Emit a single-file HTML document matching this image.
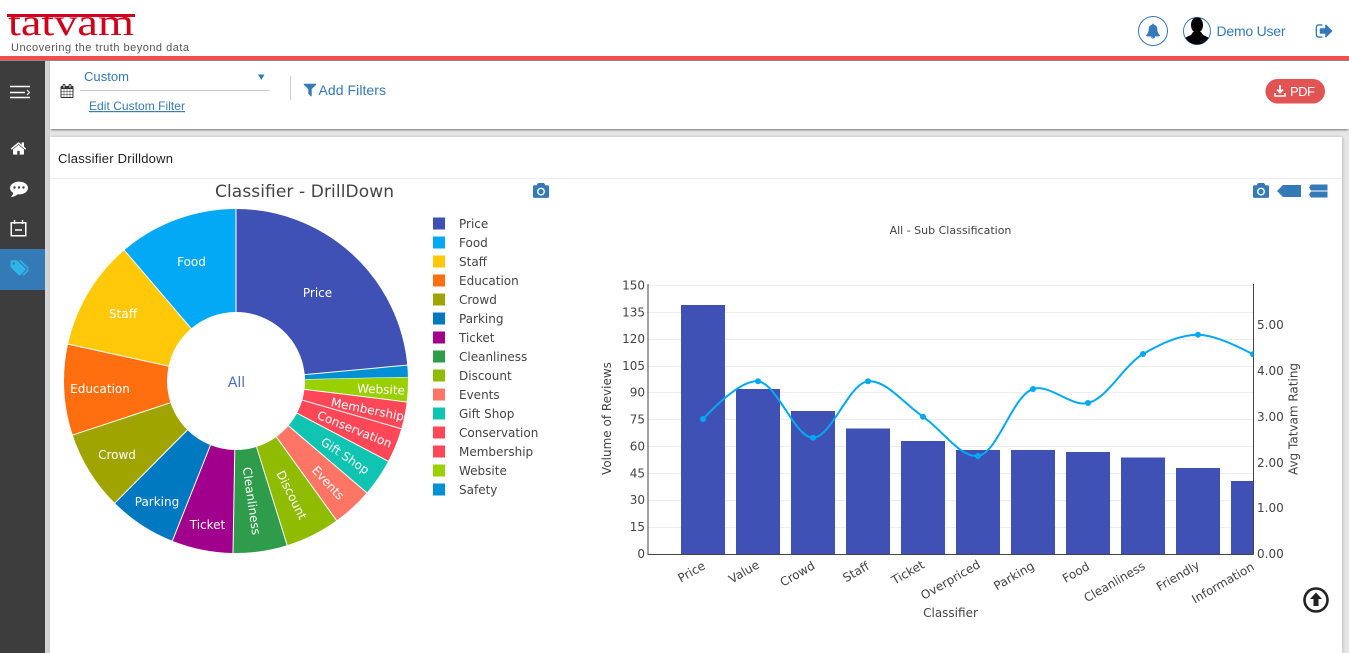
<!DOCTYPE html>
<html><head><meta charset="utf-8"><title>Tatvam</title>
<style>
html,body{margin:0;padding:0;width:1349px;height:653px;overflow:hidden;background:#e6e6e6;font-family:"Liberation Sans",sans-serif}
.a{position:absolute}
svg text{font-family:"DejaVu Sans",sans-serif;fill:#444;font-size:12px}
svg text.l{font-family:"Liberation Sans",sans-serif}
.pl text{fill:#fff;text-anchor:middle}
.lg text{fill:#444}
.t text{text-anchor:end}
.x text{text-anchor:middle}
.s circle{fill:none;stroke-width:103}
</style></head>
<body>
<div class="a" style="left:0;top:0;width:1349px;height:56px;background:#fff"></div>
<div class="a" style="left:0;top:56px;width:1349px;height:4px;background:#f44b4b"></div>
<div class="a" style="left:0;top:60px;width:45px;height:593px;background:#3d3d3d"></div>
<div class="a" style="left:0;top:249px;width:45px;height:41px;background:#337ab7"></div>
<div class="a" style="left:45px;top:60px;width:5px;height:593px;background:#d4d4d4"></div>
<div class="a" style="left:50px;top:60px;width:1299px;height:69px;background:#fff;box-shadow:0 2px 2px -1px rgba(0,0,0,.5)"></div>
<div class="a" style="left:0;top:60px;width:1349px;height:1px;background:#8a8a8a"></div>
<div class="a" style="left:50px;top:137px;width:1292px;height:516px;background:#fff;box-shadow:1px 0 3px rgba(0,0,0,.18)"></div>
<div class="a" style="left:50px;top:178px;width:1292px;height:1px;background:#eee"></div>

<svg class="a" style="left:0;top:0" width="1349" height="653" viewBox="0 0 1349 653">
<defs>
<clipPath id="plot"><rect x="648" y="284" width="605.500" height="271"/></clipPath>
<clipPath id="av"><circle cx="1197" cy="31" r="13.500"/></clipPath>
<clipPath id="lg"><rect x="0" y="16" width="140" height="24"/></clipPath>
<path id="cam" d="M896 672q119 0 203.500 84.500t84.500 203.500-84.500 203.500-203.500 84.500-203.500-84.500-84.500-203.500 84.500-203.500 203.500-84.500zm704-416q106 0 181 75t75 181v896q0 106-75 181t-181 75h-1408q-106 0-181-75t-75-181v-896q0-106 75-181t181-75h224l51-136q19-49 69.500-84.500t103.500-35.500h512q53 0 103.500 35.500t69.500 84.500l51 136h224zm-704 1152q185 0 316.500-131.500t131.500-316.500-131.500-316.500-316.500-131.500-316.500 131.500-131.500 316.500 131.500 316.500 316.500 131.500z"/>
</defs>

<!-- logo -->
<rect x="7" y="14" width="128" height="3" fill="#d0021b"/>
<g clip-path="url(#lg)"><text class="l" x="8" y="35" textLength="126" lengthAdjust="spacingAndGlyphs" style="font-size:38px;fill:#d0021b;font-family:'Liberation Serif',serif">tatvam</text></g>
<text class="l" x="11" y="51" textLength="178" style="font-size:11px;fill:#555">Uncovering the truth beyond data</text>

<!-- top right -->
<circle cx="1153" cy="31" r="14.500" fill="#fff" stroke="#337ab7"/>
<svg x="1145.500" y="23.500" width="15" height="15" viewBox="0 0 1792 1792"><path fill="#337ab7" d="M912 1696q0-16-16-16-59 0-101.500-42.500t-42.500-101.500q0-16-16-16t-16 16q0 73 51.500 124.500t124.500 51.500q16 0 16-16zm816-288q0 52-38 90t-90 38h-448q0 106-75 181t-181 75-181-75-75-181h-448q-52 0-90-38t-38-90q50-42 91-88t85-119.500 74.500-158.500 50-206 19.500-260q0-152 117-282.500t307-158.500q-8-19-8-39 0-40 28-68t68-28 68 28 28 68q0 20-8 39 190 28 307 158.500t117 282.500q0 139 19.500 260t50 206 74.500 158.500 85 119.500 91 88z"/></svg>
<circle cx="1197" cy="31" r="13.500" fill="#fff" stroke="#337ab7" stroke-width="1"/>
<g clip-path="url(#av)"><ellipse cx="1197" cy="25" rx="6" ry="8" fill="#000"/><path d="M1182 46c0-7 4-9 9-11l2-3h8l2 3c5 2 9 4 9 11z" fill="#000"/></g>
<text class="l" x="1216.500" y="36" textLength="69" style="font-size:14px;fill:#337ab7">Demo User</text>
<svg x="1315" y="21.500" width="19" height="19" viewBox="0 0 1792 1792"><path fill="#337ab7" d="M704 1440q0 4 1 20t.5 26.500-3 23.500-10 19.500-20.500 6.500h-320q-119 0-203.500-84.500t-84.500-203.500v-704q0-119 84.500-203.500t203.500-84.500h320q13 0 22.500 9.500t9.500 22.500q0 4 1 20t.5 26.500-3 23.500-10 19.500-20.500 6.500h-320q-66 0-113 47t-47 113v704q0 66 47 113t113 47h312l11.500 1 11.500 3 8 5.500 7 9 2 13.500zm928-544q0 26-19 45l-544 544q-19 19-45 19t-45-19-19-45v-288h-448q-26 0-45-19t-19-45v-384q0-26 19-45t45-19h448v-288q0-26 19-45t45-19 45 19l544 544q19 19 19 45z"/></svg>

<!-- sidebar -->
<g stroke="#fff" stroke-width="1.500" fill="none"><path d="M10 86.500h20M10 92.500h15M10 97.500h20"/><path d="M27 90l2.500 2.500-2.500 2.500" stroke-width="1"/></g>
<svg x="10" y="140" width="17" height="17" viewBox="0 0 1792 1792"><path fill="#fff" d="M1472 992v480q0 26-19 45t-45 19h-384v-384h-256v384h-384q-26 0-45-19t-19-45v-480q0-1 .5-3t.5-3l575-474 575 474q1 2 1 6zm223-69l-62 74q-8 9-21 11h-3q-13 0-21-7l-692-577-692 577q-12 8-24 7-13-2-21-11l-62-74q-8-10-7-23.500t11-21.500l719-599q32-26 76-26t76 26l244 204v-195q0-14 9-23t23-9h192q14 0 23 9t9 23v408l219 182q10 8 11 21.500t-7 23.500z"/></svg>
<svg x="10" y="179" width="18" height="18" viewBox="0 0 1792 1792"><path fill="#fff" d="M1792 896q0 174-120 321.500t-326 233-450 85.500q-70 0-145-8-198 175-460 242-49 14-114 22-17 2-30.500-9t-17.500-29v-1q-3-4-.5-12t2-10 4.500-9.500l6-9 7-8.500 8-9q7-8 31-34.500t34.500-38 31-39.500 32.500-51 27-59 26-76q-157-89-247.500-220t-90.500-281q0-130 71-248.500t191-204.500 286-136.500 348-50.500q244 0 450 85.500t326 233 120 321.500z"/></svg>
<g fill="#3d3d3d"><circle cx="14.500" cy="187.500" r="1.200"/><circle cx="19" cy="187.500" r="1.200"/><circle cx="23.500" cy="187.500" r="1.200"/></g>
<g fill="none" stroke="#fff"><rect x="11.250" y="222.750" width="14.500" height="13" stroke-width="1.500"/><path d="M14.500 220v4M22.500 220v4" stroke-width="1.500"/><path d="M15 230h7" stroke-width="1.500"/></g>
<svg x="10.500" y="259" width="18" height="18" viewBox="0 0 1792 1792"><path fill="#2fb4e6" d="M448 448q0-53-37.500-90.500t-90.500-37.500-90.500 37.500-37.500 90.500 37.500 90.500 90.500 37.500 90.500-37.500 37.500-90.500zm1067 576q0 53-37 90l-491 492q-39 37-91 37-53 0-90-37l-715-716q-38-37-64.500-101t-26.500-117v-416q0-52 38-90t90-38h416q53 0 117 26.500t102 64.500l715 714q37 39 37 91zm384 0q0 53-37 90l-491 492q-39 37-91 37-36 0-59-14t-53-45l470-470q37-37 37-90 0-52-37-91l-715-714q-38-38-102-64.500t-117-26.500h224q53 0 117 26.500t102 64.500l715 714q37 39 37 91z"/></svg>

<!-- filter bar -->
<svg x="60" y="84" width="14" height="14" viewBox="0 0 1792 1792"><path fill="#333" d="M192 1664h288v-288h-288v288zm352 0h320v-288h-320v288zm-352-352h288v-320h-288v320zm352 0h320v-320h-320v320zm-352-384h288v-288h-288v288zm736 736h320v-288h-320v288zm-384-736h320v-288h-320v288zm768 736h288v-288h-288v288zm-384-352h320v-320h-320v320zm-352-864v-288q0-13-9.500-22.500t-22.500-9.500h-64q-13 0-22.500 9.500t-9.500 22.500v288q0 13 9.500 22.500t22.500 9.500h64q13 0 22.500-9.500t9.500-22.500zm736 864h288v-320h-288v320zm-384-384h320v-288h-320v288zm384 0h288v-288h-288v288zm32-480v-288q0-13-9.500-22.500t-22.500-9.500h-64q-13 0-22.500 9.500t-9.500 22.500v288q0 13 9.500 22.500t22.500 9.500h64q13 0 22.500-9.500t9.500-22.500zm384-64v1280q0 52-38 90t-90 38h-1408q-52 0-90-38t-38-90v-1280q0-52 38-90t90-38h128v-96q0-66 47-113t113-47h64q66 0 113 47t47 113v96h384v-96q0-66 47-113t113-47h64q66 0 113 47t47 113v96h128q52 0 90 38t38 90z"/></svg>
<text class="l" x="84" y="81" textLength="45" style="font-size:13px;fill:#337ab7">Custom</text>
<path d="M258 74.500h6.500l-3.250 5.500z" fill="#337ab7"/>
<rect x="80" y="90" width="190" height="1" fill="#ccc"/>
<text class="l" x="89" y="110" textLength="96" style="font-size:12px;fill:#337ab7;text-decoration:underline">Edit Custom Filter</text>
<rect x="290" y="76" width="1" height="24" fill="#ccc"/>
<svg x="302" y="81.500" width="16" height="16" viewBox="0 0 1792 1792"><path fill="#337ab7" d="M1595 295q17 41-14 70l-493 493v742q0 42-39 59-13 5-25 5-27 0-45-19l-256-256q-19-19-19-45v-486l-493-493q-31-29-14-70 17-39 59-39h1280q42 0 59 39z"/></svg>
<text class="l" x="318.500" y="95" textLength="67.500" style="font-size:14px;fill:#337ab7">Add Filters</text>
<rect x="1265.500" y="79" width="59.500" height="24.500" rx="12.250" fill="#e25353"/>
<path d="M1280 85v7M1277 89.500l3 3 3-3" stroke="#fff" stroke-width="1.800" fill="none"/><path d="M1275 93v3h10v-3" stroke="#fff" stroke-width="1.500" fill="none"/>
<text class="l" x="1290" y="96" textLength="25" style="font-size:13px;fill:#fff">PDF</text>

<!-- card header -->
<text class="l" x="58" y="163" textLength="115" style="font-size:13px;fill:#222">Classifier Drilldown</text>

<!-- pie -->
<text x="215" y="197" textLength="179" style="font-size:17px">Classifier - DrillDown</text>
<svg x="533" y="183" width="16" height="16" viewBox="0 0 1792 1792"><use href="#cam" fill="#337ab7"/></svg>
<g class="s" transform="rotate(-90 236 381)">
<circle cx="236" cy="381" r="120.500" pathLength="360" stroke="#3f51b5" stroke-dasharray="84.7 360" stroke-dashoffset="0"/>
<circle cx="236" cy="381" r="120.500" pathLength="360" stroke="#0090d5" stroke-dasharray="4 360" stroke-dashoffset="-84.7"/>
<circle cx="236" cy="381" r="120.500" pathLength="360" stroke="#9bd000" stroke-dasharray="8.300 360" stroke-dashoffset="-88.7"/>
<circle cx="236" cy="381" r="120.500" pathLength="360" stroke="#ff4757" stroke-dasharray="9.100 360" stroke-dashoffset="-97"/>
<circle cx="236" cy="381" r="120.500" pathLength="360" stroke="#ff4757" stroke-dasharray="11.700 360" stroke-dashoffset="-106.1"/>
<circle cx="236" cy="381" r="120.500" pathLength="360" stroke="#0fc4b0" stroke-dasharray="12.700 360" stroke-dashoffset="-117.8"/>
<circle cx="236" cy="381" r="120.500" pathLength="360" stroke="#ff7565" stroke-dasharray="13.700 360" stroke-dashoffset="-130.5"/>
<circle cx="236" cy="381" r="120.500" pathLength="360" stroke="#8fbc00" stroke-dasharray="18.500 360" stroke-dashoffset="-144.2"/>
<circle cx="236" cy="381" r="120.500" pathLength="360" stroke="#2e9c4a" stroke-dasharray="18.300 360" stroke-dashoffset="-162.7"/>
<circle cx="236" cy="381" r="120.500" pathLength="360" stroke="#a0008c" stroke-dasharray="20.700 360" stroke-dashoffset="-181"/>
<circle cx="236" cy="381" r="120.500" pathLength="360" stroke="#0079c0" stroke-dasharray="23.100 360" stroke-dashoffset="-201.7"/>
<circle cx="236" cy="381" r="120.500" pathLength="360" stroke="#a0a400" stroke-dasharray="26.900 360" stroke-dashoffset="-224.8"/>
<circle cx="236" cy="381" r="120.500" pathLength="360" stroke="#ff6f10" stroke-dasharray="30.700 360" stroke-dashoffset="-251.7"/>
<circle cx="236" cy="381" r="120.500" pathLength="360" stroke="#ffc90a" stroke-dasharray="37.100 360" stroke-dashoffset="-282.400"/>
<circle cx="236" cy="381" r="120.500" pathLength="360" stroke="#03a9f4" stroke-dasharray="40.500 360" stroke-dashoffset="-319.500"/>
</g>
<g stroke="#fff" stroke-width="1">
<line x1="236" y1="312" x2="236" y2="208"/>
<line x1="236" y1="312" x2="236" y2="208" transform="rotate(84.7 236 381)"/>
<line x1="236" y1="312" x2="236" y2="208" transform="rotate(88.7 236 381)" stroke-width=".5"/>
<line x1="236" y1="312" x2="236" y2="208" transform="rotate(97 236 381)"/>
<line x1="236" y1="312" x2="236" y2="208" transform="rotate(106.1 236 381)"/>
<line x1="236" y1="312" x2="236" y2="208" transform="rotate(117.8 236 381)"/>
<line x1="236" y1="312" x2="236" y2="208" transform="rotate(130.5 236 381)"/>
<line x1="236" y1="312" x2="236" y2="208" transform="rotate(144.2 236 381)"/>
<line x1="236" y1="312" x2="236" y2="208" transform="rotate(162.7 236 381)"/>
<line x1="236" y1="312" x2="236" y2="208" transform="rotate(181 236 381)"/>
<line x1="236" y1="312" x2="236" y2="208" transform="rotate(201.7 236 381)"/>
<line x1="236" y1="312" x2="236" y2="208" transform="rotate(224.8 236 381)"/>
<line x1="236" y1="312" x2="236" y2="208" transform="rotate(251.7 236 381)"/>
<line x1="236" y1="312" x2="236" y2="208" transform="rotate(282.4 236 381)"/>
<line x1="236" y1="312" x2="236" y2="208" transform="rotate(319.5 236 381)"/>
</g>
<g class="pl">
<text x="317.500" y="297">Price</text>
<text x="191.500" y="266">Food</text>
<text x="123" y="318">Staff</text>
<text x="100" y="393">Education</text>
<text x="117" y="459">Crowd</text>
<text x="157" y="506">Parking</text>
<text x="207.500" y="529">Ticket</text>
<text transform="translate(251.500 501) rotate(81.900)" y="4">Cleanliness</text>
<text transform="translate(291.500 495) rotate(63.500)" y="4">Discount</text>
<text transform="translate(328 483) rotate(47.300)" y="4">Events</text>
<text transform="translate(345 456) rotate(34)" y="4">Gift Shop</text>
<text transform="translate(354.500 429.500) rotate(21.900)" y="4">Conservation</text>
<text transform="translate(367.500 409.500) rotate(11.500)" y="4">Membership</text>
<text transform="translate(381 389.500) rotate(2.800)" y="4">Website</text>
</g>
<text x="236.500" y="387" text-anchor="middle" style="font-size:14px;fill:#4a6fc4">All</text>

<!-- legend -->
<g class="lg">
<rect x="433" y="217.500" width="12" height="12" fill="#3f51b5"/><text x="459" y="228">Price</text>
<rect x="433" y="236.500" width="12" height="12" fill="#03a9f4"/><text x="459" y="247">Food</text>
<rect x="433" y="255.500" width="12" height="12" fill="#ffc90a"/><text x="459" y="266">Staff</text>
<rect x="433" y="274.500" width="12" height="12" fill="#ff6f10"/><text x="459" y="285">Education</text>
<rect x="433" y="293.500" width="12" height="12" fill="#a0a400"/><text x="459" y="304">Crowd</text>
<rect x="433" y="312.500" width="12" height="12" fill="#0079c0"/><text x="459" y="323">Parking</text>
<rect x="433" y="331.500" width="12" height="12" fill="#a0008c"/><text x="459" y="342">Ticket</text>
<rect x="433" y="350.500" width="12" height="12" fill="#2e9c4a"/><text x="459" y="361">Cleanliness</text>
<rect x="433" y="369.500" width="12" height="12" fill="#8fbc00"/><text x="459" y="380">Discount</text>
<rect x="433" y="388.500" width="12" height="12" fill="#ff7565"/><text x="459" y="399">Events</text>
<rect x="433" y="407.500" width="12" height="12" fill="#0fc4b0"/><text x="459" y="418">Gift Shop</text>
<rect x="433" y="426.500" width="12" height="12" fill="#ff4757"/><text x="459" y="437">Conservation</text>
<rect x="433" y="445.500" width="12" height="12" fill="#ff4757"/><text x="459" y="456">Membership</text>
<rect x="433" y="464.500" width="12" height="12" fill="#9bd000"/><text x="459" y="475">Website</text>
<rect x="433" y="483.500" width="12" height="12" fill="#0090d5"/><text x="459" y="494">Safety</text>
</g>

<!-- right chart toolbar -->
<svg x="1253" y="183" width="16" height="16" viewBox="0 0 1792 1792"><use href="#cam" fill="#337ab7"/></svg>
<path d="M1277 191l6-6h18v12h-18z" fill="#337ab7"/>
<path d="M1311 184.500h16.500v6h-16.500l-2-3zM1311 191.500h16.500v6h-16.500l-2-3z" fill="#337ab7"/>
<text x="950.500" y="234" text-anchor="middle" style="font-size:11px">All - Sub Classification</text>

<!-- grid -->
<g stroke="#eee" stroke-width="1">
<path d="M648 285.500h605M648 312.500h605M648 339.500h605M648 366.500h605M648 392.500h605M648 419.500h605M648 446.500h605M648 473.500h605M648 500.500h605M648 527.500h605"/>
</g>
<!-- bars -->
<g fill="#3f51b5">
<rect x="681" y="305" width="44" height="249"/>
<rect x="736" y="389" width="44" height="165"/>
<rect x="791" y="411" width="44" height="143"/>
<rect x="846" y="428.500" width="44" height="125.500"/>
<rect x="901" y="441" width="44" height="113"/>
<rect x="956" y="450" width="44" height="104"/>
<rect x="1011" y="450" width="44" height="104"/>
<rect x="1066" y="452" width="44" height="102"/>
<rect x="1121" y="457.500" width="44" height="96.500"/>
<rect x="1176" y="468" width="44" height="86"/>
<rect x="1231" y="481" width="22.500" height="73"/>
</g>
<!-- axes -->
<g stroke="#444" stroke-width="1"><path d="M648 284v270.500M1253.500 284v270.500M647.500 554.500h606"/></g>
<!-- line -->
<g clip-path="url(#plot)">
<path fill="none" stroke="#03a9f4" stroke-width="2" d="M703 419Q740.400 379.600 758 381.300C777.100 383.200 794.700 437.700 813 437.700C831.300 437.700 848.700 383.500 868 381.300C885.500 379.300 904.800 404.400 923 416.700C941.500 429.200 960.700 458.300 978 456C997.600 453.400 1012.300 395.800 1033 389C1049.800 383.500 1070.700 407.200 1088 403C1107.700 398.200 1123.500 365.500 1143 354C1160.400 343.800 1179.700 334.650 1198 334.700Q1216.300 334.750 1253 354.300"/>
<g fill="#03a9f4"><circle cx="703" cy="419" r="3"/><circle cx="758" cy="381.300" r="3"/><circle cx="813" cy="437.700" r="3"/><circle cx="868" cy="381.300" r="3"/><circle cx="923" cy="416.700" r="3"/><circle cx="978" cy="456" r="3"/><circle cx="1033" cy="389" r="3"/><circle cx="1088" cy="403" r="3"/><circle cx="1143" cy="354" r="3"/><circle cx="1198" cy="334.700" r="3"/><circle cx="1253" cy="354.300" r="3"/></g>
</g>
<!-- y ticks -->
<g class="t">
<text x="645" y="289.500">150</text><text x="645" y="316.500">135</text><text x="645" y="343">120</text><text x="645" y="370">105</text><text x="645" y="396.500">90</text><text x="645" y="423.500">75</text><text x="645" y="450.500">60</text><text x="645" y="477.500">45</text><text x="645" y="504">30</text><text x="645" y="531">15</text><text x="645" y="558">0</text>
</g>
<text x="1257" y="329">5.00</text><text x="1257" y="375">4.00</text><text x="1257" y="421">3.00</text><text x="1257" y="467">2.00</text><text x="1257" y="512">1.00</text><text x="1257" y="558">0.00</text>
<text transform="translate(611 418.500) rotate(-90)" text-anchor="middle">Volume of Reviews</text>
<text transform="translate(1297.500 419) rotate(-90)" text-anchor="middle">Avg Tatvam Rating</text>
<text x="950.500" y="617" text-anchor="middle">Classifier</text>
<!-- x ticks -->
<g class="x">
<text transform="translate(691.500 572) rotate(-30)" y="4">Price</text>
<text transform="translate(744 572) rotate(-30)" y="4">Value</text>
<text transform="translate(797.500 574) rotate(-30)" y="4">Crowd</text>
<text transform="translate(856 572) rotate(-30)" y="4">Staff</text>
<text transform="translate(908 572.500) rotate(-30)" y="4">Ticket</text>
<text transform="translate(950.500 580) rotate(-30)" y="4">Overpriced</text>
<text transform="translate(1014 576) rotate(-30)" y="4">Parking</text>
<text transform="translate(1076 572.500) rotate(-30)" y="4">Food</text>
<text transform="translate(1114.500 582) rotate(-30)" y="4">Cleanliness</text>
<text transform="translate(1178 576) rotate(-30)" y="4">Friendly</text>
<text transform="translate(1223 583) rotate(-30)" y="4">Information</text>
</g>
<!-- back to top -->
<circle cx="1316" cy="600" r="11.500" fill="#fff" stroke="#222" stroke-width="2.600"/>
<path d="M1316 592.500l6 6.500h-3.500v7h-5v-7h-3.500z" fill="#222"/>
</svg>
</body></html>
